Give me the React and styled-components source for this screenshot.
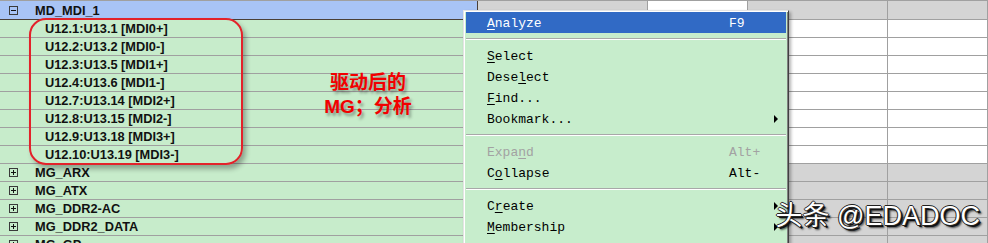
import React from "react"
import styled, { createGlobalStyle } from "styled-components"

const GREEN = "#c7eccb"
const BLUE = "#a8c4f6"
const GRAY = "#d4d4d4"
const LINE = "#a0a0a0"

const GlobalStyle = createGlobalStyle`
  html, body {
    margin: 0;
    padding: 0;
    background: #fff;
    overflow: hidden;
  }
`

const Page = styled.div`
  position: relative;
  width: 988px;
  height: 243px;
  overflow: hidden;
  background: ${GRAY};
  font-family: "Liberation Sans", Arial, sans-serif;
`

const Sheet = styled.div`
  display: flex;
  flex-direction: column;
  border-top: 1px solid ${LINE};
`

const Row = styled.div`
  display: grid;
  grid-template-columns: 478px 170px 100px 140px 1fr;
  height: ${(p) => p.$h}px;
`

const NameCell = styled.div`
  display: flex;
  align-items: center;
  box-sizing: border-box;
  padding-left: ${(p) => p.$indent}px;
  background: ${(p) => (p.$header ? BLUE : GREEN)};
  border-bottom: 1px solid ${(p) => (p.$header ? "#4a4038" : LINE)};
  border-right: 1px solid ${(p) => (p.$header ? "#4a4038" : LINE)};
  font-size: 12.8px;
  font-weight: bold;
  color: #111;
  white-space: nowrap;
  overflow: hidden;
`

const Cell = styled.div`
  box-sizing: border-box;
  background: ${(p) => p.$bg};
  border-bottom: 1px solid ${LINE};
  border-right: 1px solid ${LINE};
`

const Toggle = styled.span`
  position: relative;
  flex: none;
  width: 9px;
  height: 9px;
  box-sizing: border-box;
  border: 1px solid #3a3a3a;
  margin-right: 17px;

  &::before {
    content: "";
    position: absolute;
    left: 1px;
    right: 1px;
    top: 3px;
    height: 1px;
    background: #111;
  }

  &::after {
    content: "";
    display: ${(p) => (p.$open ? "none" : "block")};
    position: absolute;
    top: 1px;
    bottom: 1px;
    left: 3px;
    width: 1px;
    background: #111;
  }
`

const Callout = styled.div`
  position: absolute;
  left: 29px;
  top: 18px;
  width: 214px;
  height: 147px;
  box-sizing: border-box;
  border: 2px solid #e3222a;
  border-radius: 17px;
  box-shadow: 3px 4px 5px rgba(0, 0, 0, 0.3);
`

const Note = styled.div`
  position: absolute;
  left: 318px;
  top: 71px;
  width: 100px;
  text-align: center;
  font-family: "Liberation Sans", "Noto Sans CJK SC", sans-serif;
  font-size: 19px;
  font-weight: bold;
  line-height: 24px;
  color: #f20000;
  text-shadow: 2px 3px 3px rgba(0, 0, 0, 0.35);
`

const Menu = styled.div`
  position: absolute;
  left: 463px;
  top: 10px;
  width: 326px;
  height: 250px;
  box-sizing: border-box;
  padding: 1px 2px;
  background: #c7edcc;
  border: 1px solid;
  border-color: #e4e4e4 #404040 #404040 #e4e4e4;
  box-shadow: inset 1px 1px #fff, inset -1px -1px #808080,
    2px 2px 3px rgba(0, 0, 0, 0.3);
  font-family: "Liberation Mono", "Courier New", monospace;
  font-size: 13px;
`

const Item = styled.div`
  position: relative;
  display: flex;
  align-items: center;
  box-sizing: border-box;
  height: 21px;
  padding: 2px 0 0 21px;
  background: ${(p) => (p.$active ? "#316ac5" : "transparent")};
  color: ${(p) => (p.$active ? "#fff" : p.$disabled ? "#a2a2a2" : "#000")};
  white-space: pre;
`

const Label = styled.span`
  flex: 0 0 242px;
`

const Key = styled.span``

const Mn = styled.span`
  text-decoration: underline;
  text-underline-offset: 2px;
`

const Arrow = styled.span`
  position: absolute;
  right: 8px;
  top: 7px;
  width: 0;
  height: 0;
  border-left: 4px solid #000;
  border-top: 4px solid transparent;
  border-bottom: 4px solid transparent;
`

const Separator = styled.div`
  height: 2px;
  margin: 5px 0;
  border-top: 1px solid #a8a8a8;
  border-bottom: 1px solid #fff;
  box-sizing: border-box;
`

const Watermark = styled.div`
  position: absolute;
  right: 8px;
  top: 200px;
  font-family: "Liberation Sans", "Noto Sans CJK SC", sans-serif;
  font-size: 27px;
  line-height: 32px;
  color: #fff;
  white-space: nowrap;
  text-shadow: -1px 0 #222, 0 -1px #222, 1px 0 #222, 0 1px #222,
    2px 2px 0 #111, 3px 3px 2px rgba(0, 0, 0, 0.7);
`

const rows = [
  { label: "MD_MDI_1", kind: "header", open: true },
  { label: "U12.1:U13.1 [MDI0+]", kind: "child" },
  { label: "U12.2:U13.2 [MDI0-]", kind: "child" },
  { label: "U12.3:U13.5 [MDI1+]", kind: "child" },
  { label: "U12.4:U13.6 [MDI1-]", kind: "child" },
  { label: "U12.7:U13.14 [MDI2+]", kind: "child" },
  { label: "U12.8:U13.15 [MDI2-]", kind: "child" },
  { label: "U12.9:U13.18 [MDI3+]", kind: "child" },
  { label: "U12.10:U13.19 [MDI3-]", kind: "child" },
  { label: "MG_ARX", kind: "group" },
  { label: "MG_ATX", kind: "group" },
  { label: "MG_DDR2-AC", kind: "group" },
  { label: "MG_DDR2_DATA", kind: "group" },
  { label: "MG_GP", kind: "group" },
]

const rightCells = (kind) => {
  if (kind === "header") return [GRAY, "#fff", GRAY, GRAY]
  if (kind === "child") return ["#fff", "#fff", "#fff", "#fff"]
  return [GRAY, GRAY, GRAY, GRAY]
}

const App = () => {
  return (
    <Page>
      <GlobalStyle />
      <Sheet>
        {rows.map((r, i) => (
          <Row key={i} $h={r.kind === "header" ? 19 : 18}>
            <NameCell $header={r.kind === "header"} $indent={r.kind === "child" ? 45 : 9}>
              {r.kind !== "child" && <Toggle $open={r.open} />}
              {r.label}
            </NameCell>
            {rightCells(r.kind).map((bg, j) => (
              <Cell key={j} $bg={bg} />
            ))}
          </Row>
        ))}
      </Sheet>

      <Callout />
      <Note>
        驱动后的
        <br />
        MG；分析
      </Note>

      <Menu>
        <Item $active>
          <Label>
            <Mn>A</Mn>nalyze
          </Label>
          <Key>F9</Key>
        </Item>
        <Separator />
        <Item>
          <Label>
            <Mn>S</Mn>elect
          </Label>
        </Item>
        <Item>
          <Label>
            Dese<Mn>l</Mn>ect
          </Label>
        </Item>
        <Item>
          <Label>
            <Mn>F</Mn>ind...
          </Label>
        </Item>
        <Item>
          <Label>Bookmark...</Label>
          <Arrow />
        </Item>
        <Separator />
        <Item $disabled>
          <Label>
            Expa<Mn>n</Mn>d
          </Label>
          <Key>Alt+</Key>
        </Item>
        <Item>
          <Label>
            C<Mn>o</Mn>llapse
          </Label>
          <Key>Alt-</Key>
        </Item>
        <Separator />
        <Item>
          <Label>
            C<Mn>r</Mn>eate
          </Label>
          <Arrow />
        </Item>
        <Item>
          <Label>
            <Mn>M</Mn>embership
          </Label>
          <Arrow />
        </Item>
      </Menu>

      <Watermark>头条 @EDADOC</Watermark>
    </Page>
  )
}

export default App
